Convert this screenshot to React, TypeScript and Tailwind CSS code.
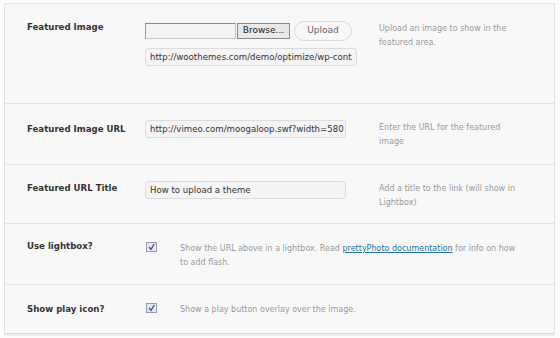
const FONT = "font-['DejaVu_Sans',Verdana,sans-serif]";

function Label({ children, className = "" }: { children: React.ReactNode; className?: string }) {
  return (
    <div className={`w-[118px] shrink-0 ${FONT} text-[8.6px] font-bold leading-[18px] text-[#333] ${className}`}>
      {children}
    </div>
  );
}

function Desc({ lines, className = "" }: { lines: React.ReactNode[]; className?: string }) {
  return (
    <div className={`${FONT} text-[8px] leading-[14px] whitespace-nowrap text-[#9a9a9a] ${className}`}>
      {lines.map((l, i) => (
        <div key={i}>{l}</div>
      ))}
    </div>
  );
}

function TextField({ value, width }: { value: string; width: string }) {
  return (
    <div
      className={`${width} h-[18px] overflow-hidden whitespace-nowrap rounded-[3px] border border-[#dcdcdc] bg-[#f4f4f4] pl-[4px] ${FONT} text-[8.6px] leading-[16px] text-[#333]`}
    >
      {value}
    </div>
  );
}

function Check() {
  return (
    <svg width="11" height="10" viewBox="0 0 11 10" className="block">
      <rect x="0.5" y="0.5" width="10" height="9" fill="#e6e8ef" stroke="#9a9ca8" />
      <path d="M3 5 L5 7.3 L8.3 2" fill="none" stroke="#3a4fb0" strokeWidth="1.3" />
    </svg>
  );
}

export default function App() {
  return (
    <div className="h-[338px] w-[560px] bg-[#fcfcfc] pl-[4px] pt-[3px]">
      <div className="w-[551px] border-x border-t border-[#e2e2e2] bg-[#f8f8f8] shadow-[0_2px_0_#ececec]">
        {/* featured image */}
        <div className="flex h-[100px] items-start border-b border-[#e2e2e2] pl-[22px] pt-[17px]">
          <Label className="-mt-[3px]">Featured Image</Label>
          <div className="w-[234px] shrink-0">
            <div className="flex h-[20px] items-center">
              <div className="h-[16px] w-[91px] border border-[#c8c8c8] border-t-[#888] border-l-[#999] bg-[#f3f3f3]" />
              <div className={`ml-[1px] flex h-[16px] w-[53px] items-center justify-center border border-[#8a8a8a] bg-[#e9e9e9] ${FONT} text-[9px] text-[#222]`}>
                Browse...
              </div>
              <div className={`ml-[4px] flex h-[20px] w-[58px] items-center justify-center rounded-full border border-[#dadada] bg-[#f7f7f7] ${FONT} text-[9px] text-[#666]`}>
                Upload
              </div>
            </div>
            <div className="mt-[7px]">
              <TextField value="http://woothemes.com/demo/optimize/wp-cont" width="w-[212px]" />
            </div>
          </div>
          <Desc className="pt-[1px]" lines={["Upload an image to show in the", "featured area."]} />
        </div>

        {/* featured image url */}
        <div className="flex h-[61px] items-start border-b border-[#e2e2e2] pl-[22px] pt-[16px]">
          <Label>Featured Image URL</Label>
          <div className="w-[234px] shrink-0">
            <TextField value="http://vimeo.com/moogaloop.swf?width=580" width="w-[201px]" />
          </div>
          <Desc className="pt-[1px]" lines={["Enter the URL for the featured", "image"]} />
        </div>

        {/* featured url title */}
        <div className="flex h-[59px] items-start border-b border-[#e2e2e2] pl-[22px] pt-[16px]">
          <Label className="-mt-[2px]">Featured URL Title</Label>
          <div className="w-[234px] shrink-0">
            <TextField value="How to upload a theme" width="w-[201px]" />
          </div>
          <Desc className="pt-[1px]" lines={["Add a title to the link (will show in", "Lightbox)"]} />
        </div>

        {/* lightbox */}
        <div className="flex h-[61px] items-start border-b border-[#e2e2e2] pl-[22px] pt-[13px]">
          <Label>Use lightbox?</Label>
          <div className="w-[35px] shrink-0 pl-[1px] pt-[5px]">
            <Check />
          </div>
          <Desc
            className="pt-[5px]"
            lines={[
              <>
                Show the URL above in a lightbox. Read{" "}
                <a className="text-[#21759b] underline">prettyPhoto documentation</a> for info on how
              </>,
              "to add flash.",
            ]}
          />
        </div>

        {/* play icon */}
        <div className="flex h-[49px] items-start border-b border-[#dadada] pl-[22px] pt-[15px]">
          <Label>Show play icon?</Label>
          <div className="w-[35px] shrink-0 pl-[1px] pt-[3px]">
            <Check />
          </div>
          <Desc className="pt-[3px]" lines={["Show a play button overlay over the image."]} />
        </div>
      </div>
    </div>
  );
}
